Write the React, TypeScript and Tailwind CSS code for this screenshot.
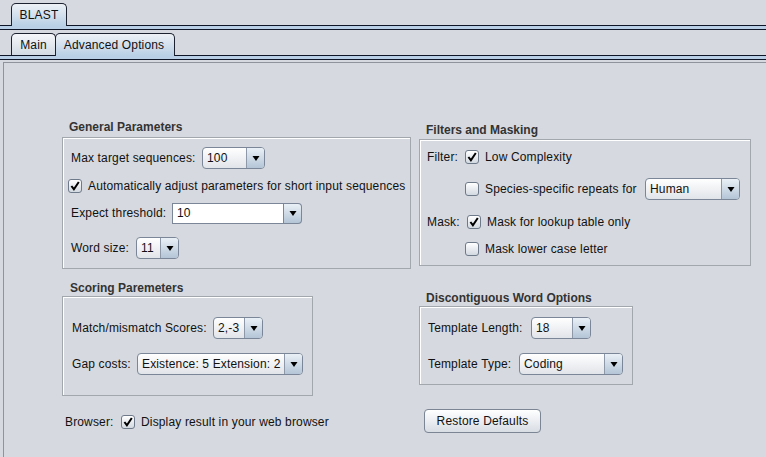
import React from 'react';

function Arrow() {
  return (
    <svg width="8" height="5" viewBox="0 0 8 5">
      <path d="M0.5 0H7.5L4 5Z" fill="#000" />
    </svg>
  );
}

function Check({ checked }: { checked: boolean }) {
  return (
    <span className="flex h-[14px] w-[14px] shrink-0 items-center justify-center rounded-[3px] border border-[#6e7a8a] bg-gradient-to-b from-white to-[#d3d9e1]">
      {checked && (
        <svg width="10" height="10" viewBox="0 0 10 10">
          <path d="M1.4 5 L3.9 8.2 L8.8 1" fill="none" stroke="#000" strokeWidth="2" />
        </svg>
      )}
    </span>
  );
}

function CheckRow({ checked, label, className = '' }: { checked: boolean; label: string; className?: string }) {
  return (
    <label className={`flex h-[16px] shrink-0 items-center ${className}`}>
      <Check checked={checked} />
      <span className="ml-[6px]">{label}</span>
    </label>
  );
}

function Combo({ value, className }: { value: string; className: string }) {
  return (
    <div className={`flex h-[22px] shrink-0 rounded-[4px] border border-[#7b8798] bg-gradient-to-b from-white to-[#e1e4e9] ${className}`}>
      <span className="flex-1 pl-[4px] leading-[20px] text-[#111]">{value}</span>
      <span className="flex w-[18px] items-center justify-center rounded-r-[3px] border-l border-[#8d99a8] bg-gradient-to-b from-[#eaf0f6] to-[#b4c5d7]">
        <Arrow />
      </span>
    </div>
  );
}

function EditCombo({ value, className }: { value: string; className: string }) {
  return (
    <div className={`flex h-[21px] shrink-0 ${className}`}>
      <span className="flex-1 border border-[#7b8798] bg-white pl-[4px] leading-[19px] text-[#111]">{value}</span>
      <span className="flex w-[18px] items-center justify-center rounded-r-[4px] border border-l-0 border-[#7b8798] bg-gradient-to-b from-[#eaf0f6] to-[#b4c5d7]">
        <Arrow />
      </span>
    </div>
  );
}

function Title({ children }: { children: React.ReactNode }) {
  return <div className="h-[14px] pl-[7px] font-bold leading-[14px] tracking-normal text-[#333]">{children}</div>;
}

const box = 'border border-[#a2a6ad] shadow-[inset_1px_1px_0_#ffffff]';

export default function App() {
  return (
    <div className="h-[457px] w-[766px] overflow-hidden bg-[#d6d9df] font-['Liberation_Sans',Arial,sans-serif] text-[12px] leading-[14px] tracking-[0.15px] text-[#111]">
      {/* outer tabs */}
      <div className="flex h-[25px] items-end pl-[11px]">
        <div className="relative z-10 -mb-px flex h-[23px] w-[56px] items-center justify-center rounded-t-[5px] border border-b-0 border-[#1c2230] bg-gradient-to-b from-[#eef1f6] to-[#b8cfe5]">
          BLAST
        </div>
      </div>
      <div className="h-[5px] border-y border-[#0e1526] bg-[#b8cfe5]" />

      {/* inner tabs */}
      <div className="flex h-[25px] items-end pl-[11px]">
        <div className="flex h-[22px] w-[45px] items-center justify-center rounded-t-[5px] border border-b-0 border-[#1c2230] bg-gradient-to-b from-[#f5f7fa] to-[#d3dae3]">
          Main
        </div>
        <div className="relative z-10 -mb-px -ml-px flex h-[23px] w-[120px] items-center justify-center rounded-t-[5px] border border-b-0 border-[#1c2230] bg-gradient-to-b from-[#eef1f6] to-[#b8cfe5] pr-[2px]">
          Advanced Options
        </div>
      </div>
      <div className="h-[5px] border-y border-[#0e1526] bg-[#b8cfe5]" />

      {/* panel */}
      <div className="ml-[3px] mt-[2px] flex h-[395px] border-l border-t border-[#8f949c] pl-[58px]">
        {/* left column */}
        <div className="flex w-[349px] flex-col pt-[57px]">
          <Title>General Parameters</Title>
          <div className={`mt-[3px] flex h-[132px] flex-col pt-[9px] ${box}`}>
            <div className="flex h-[22px] items-center pl-[8px]">
              <span className="w-[131px] shrink-0">Max target sequences:</span>
              <Combo value="100" className="w-[63px]" />
            </div>
            <CheckRow checked label="Automatically adjust parameters for short input sequences" className="mt-[9px] pl-[5px]" />
            <div className="mt-[8px] flex h-[22px] items-center pl-[8px]">
              <span className="w-[101px] shrink-0">Expect threshold:</span>
              <EditCombo value="10" className="w-[130px]" />
            </div>
            <div className="mt-[13px] flex h-[22px] items-center pl-[8px]">
              <span className="w-[65px] shrink-0">Word size:</span>
              <Combo value="11" className="w-[43px]" />
            </div>
          </div>

          <div className="mt-[12px] pl-[1px]">
            <Title>Scoring Paremeters</Title>
          </div>
          <div className={`mt-[1px] flex h-[100px] w-[251px] flex-col pt-[20px] ${box}`}>
            <div className="flex h-[22px] items-center pl-[9px]">
              <span className="w-[141px] shrink-0">Match/mismatch Scores:</span>
              <Combo value="2,-3" className="w-[50px]" />
            </div>
            <div className="mt-[14px] flex h-[22px] items-center pl-[9px]">
              <span className="w-[65px] shrink-0">Gap costs:</span>
              <Combo value="Existence: 5 Extension: 2" className="w-[166px]" />
            </div>
          </div>

          <div className="mt-[18px] flex h-[16px] items-center pl-[3px]">
            <span className="w-[56px] shrink-0">Browser:</span>
            <CheckRow checked label="Display result in your web browser" />
          </div>
        </div>

        {/* right column */}
        <div className="ml-[8px] flex w-[332px] flex-col pt-[60px]">
          <Title>Filters and Masking</Title>
          <div className={`mt-[2px] flex h-[127px] flex-col pt-[9px] ${box}`}>
            <div className="flex h-[16px] items-center pl-[7px]">
              <span className="w-[38px] shrink-0">Filter:</span>
              <CheckRow checked label="Low Complexity" />
            </div>
            <div className="mt-[13px] flex h-[22px] items-center pl-[45px]">
              <CheckRow checked={false} label="Species-specific repeats for" className="w-[180px]" />
              <Combo value="Human" className="w-[95px]" />
            </div>
            <div className="mt-[14px] flex h-[16px] items-center pl-[7px]">
              <span className="w-[40px] shrink-0">Mask:</span>
              <CheckRow checked label="Mask for lookup table only" />
            </div>
            <CheckRow checked={false} label="Mask lower case letter" className="mt-[11px] pl-[45px]" />
          </div>

          <div className="mt-[25px]">
            <Title>Discontiguous Word Options</Title>
          </div>
          <div className={`mt-[1px] flex h-[79px] w-[214px] flex-col pt-[10px] ${box}`}>
            <div className="flex h-[22px] items-center pl-[8px]">
              <span className="w-[103px] shrink-0">Template Length:</span>
              <Combo value="18" className="w-[60px]" />
            </div>
            <div className="mt-[14px] flex h-[22px] items-center pl-[8px]">
              <span className="w-[91px] shrink-0">Template Type:</span>
              <Combo value="Coding" className="w-[104px]" />
            </div>
          </div>

          <div className="mt-[24px] pl-[5px]">
            <button className="h-[24px] w-[117px] rounded-[4px] border border-[#7b8594] bg-gradient-to-b from-white to-[#d8dde4] text-[12px] tracking-[0.15px] text-[#111]">
              Restore Defaults
            </button>
          </div>
        </div>
      </div>
    </div>
  );
}
